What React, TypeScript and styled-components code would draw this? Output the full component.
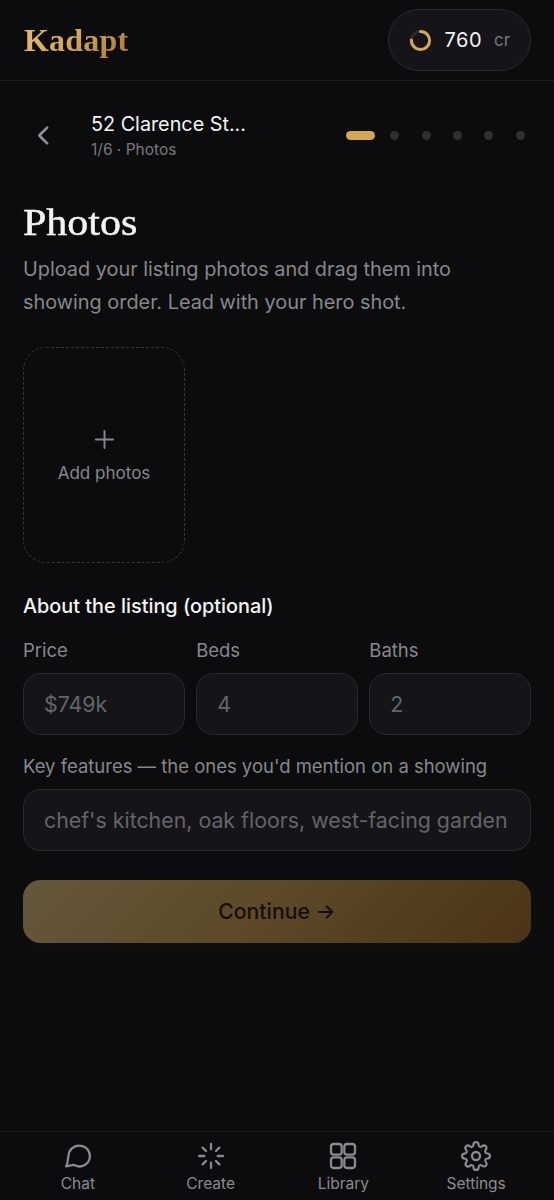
import React from "react";
import styled, { createGlobalStyle } from "styled-components";

const GlobalStyle = createGlobalStyle`
  *, *::before, *::after { box-sizing: border-box; }
  body {
    margin: 0;
    background: #0c0c0e;
    color: #f4f4f5;
    font-family: Inter, "Liberation Sans", sans-serif;
  }
  button, input { font: inherit; color: inherit; }
`;

const Screen = styled.div`
  display: flex;
  flex-direction: column;
  height: 1200px;
  width: 100%;
`;

const Header = styled.header`
  display: flex;
  align-items: center;
  justify-content: space-between;
  height: 81px;
  padding: 0 23px;
  border-bottom: 1px solid #1e1e20;
`;

const Brand = styled.div`
  padding-left: 1px;
  font-family: "Liberation Serif", serif;
  font-size: 32px;
  font-weight: 700;
  line-height: 40px;
  letter-spacing: 0.2px;
  background: linear-gradient(135deg, #e6c277 0%, #d4a650 50%, #a87532 100%);
  background-clip: text;
  -webkit-background-clip: text;
  color: transparent;
`;

const Credits = styled.div`
  display: flex;
  align-items: center;
  width: 143px;
  height: 62px;
  padding-left: 20px;
  border: 1px solid #2a2a2d;
  border-radius: 31px;
  background: #151519;
  svg { display: block; }
`;

const CreditCount = styled.span`
  margin-left: 12.5px;
  font-size: 20px;
  letter-spacing: 0.5px;
`;

const CreditUnit = styled.span`
  margin-left: 12px;
  font-size: 17px;
  color: #77777c;
`;

const Main = styled.main`
  flex: 1;
  display: flex;
  flex-direction: column;
  padding: 23px 23px 0;
`;

const StepBar = styled.div`
  display: flex;
  align-items: center;
  height: 62px;
`;

const BackButton = styled.button`
  display: flex;
  align-items: center;
  justify-content: center;
  width: 40px;
  height: 58px;
  padding: 0;
  border: 0;
  background: none;
  color: #8f8f94;
`;

const StepText = styled.div`
  flex: 1;
  margin-left: 28px;
`;

const StepTitle = styled.div`
  font-size: 19.8px;
  line-height: 28px;
`;

const StepMeta = styled.div`
  font-size: 15.5px;
  line-height: 23px;
  color: #77777c;
`;

const Dots = styled.div`
  display: flex;
  align-items: center;
  gap: 22.3px;
  padding-right: 6.5px;
`;

const Dot = styled.span<{ $active?: boolean }>`
  width: ${(p) => (p.$active ? 29 : 9)}px;
  height: 9px;
  margin-right: ${(p) => (p.$active ? -7 : 0)}px;
  border-radius: 5px;
  background: ${(p) => (p.$active ? "#d4a853" : "#303032")};
`;

const Title = styled.h1`
  align-self: flex-start;
  margin: 34px 0 0;
  font-family: "Liberation Serif", serif;
  font-size: 38px;
  font-weight: 400;
  line-height: 44px;
  transform: scaleX(1.105);
  transform-origin: left;
  -webkit-text-stroke: 0.5px currentColor;
`;

const Intro = styled.p`
  margin: 9px 0 0;
  font-size: 19.87px;
  line-height: 32.5px;
  color: #87878c;
`;

const AddTile = styled.button`
  display: flex;
  flex-direction: column;
  align-items: center;
  justify-content: center;
  gap: 6px;
  width: 162px;
  height: 216px;
  margin-top: 29px;
  padding: 1px 0 0;
  border: 1px dashed #363639;
  border-radius: 23px;
  background: none;
  color: #87878c;
  font-size: 17.05px;
  line-height: 26px;
`;

const SectionTitle = styled.h2`
  margin: 29px 0 0;
  font-size: 19.85px;
  font-weight: 500;
  line-height: 29px;
`;

const FieldRow = styled.div`
  display: grid;
  grid-template-columns: repeat(3, 1fr);
  gap: 11.5px;
  margin-top: 16px;
`;

const Field = styled.label<{ $top?: number }>`
  display: flex;
  flex-direction: column;
  gap: 10px;
  min-width: 0;
  margin-top: ${(p) => p.$top ?? 0}px;
  font-size: 18.48px;
  line-height: 26px;
  color: #87878c;
`;

const Input = styled.input`
  width: 100%;
  height: 62px;
  padding: 0 20px;
  border: 1px solid #29292c;
  border-radius: 17.5px;
  background: #151519;
  font-size: 21.33px;
  outline: none;
  &::placeholder { color: #646469; opacity: 1; }
`;

const Continue = styled.button`
  height: 62.5px;
  margin-top: 29px;
  padding: 0;
  border: 0;
  border-radius: 17.5px;
  background: linear-gradient(135deg, #65583a 0%, #5c4a29 45%, #4a3415 100%);
  box-shadow: 0 6px 26px rgba(212, 168, 83, 0.04);
  color: #1a0d08;
  font-size: 21.2px;
  font-weight: 550;
`;

const TabBar = styled.nav`
  display: grid;
  grid-template-columns: repeat(4, 1fr);
  height: 69px;
  padding: 0 11.5px;
  border-top: 1px solid #1c1c1e;
`;

const Tab = styled.div`
  display: flex;
  flex-direction: column;
  align-items: center;
  padding-top: 8px;
  color: #8a8a8f;
  font-size: 15.5px;
  line-height: 23px;
  svg { display: block; }
`;

const Icon = ({ size = 32, weight = 1.7, children }: { size?: number; weight?: number; children: React.ReactNode }) => (
  <svg width={size} height={size} viewBox="0 0 24 24" fill="none" stroke="currentColor"
    strokeWidth={weight} strokeLinecap="round" strokeLinejoin="round">
    {children}
  </svg>
);

const tabs = [
  {
    label: "Chat",
    icon: <path d="M20.9 11.9a7.8 7.8 0 0 1-11.6 6.9Q8.5 18.6 7.6 18.9L3.1 19.8Q4.2 17.6 4.3 15.5Q4.4 13.8 4.9 12A8 7.8 0 0 1 20.9 11.9z" />,
  },
  {
    label: "Create",
    icon: <path d="M12 3v4M12 17v4M3 12h4M17 12h4M5.7 5.7l2.6 2.6M15.7 15.7l2.6 2.6M5.7 18.3l2.6-2.6M15.7 8.3l2.6-2.6" />,
  },
  {
    label: "Library",
    icon: (
      <>
        <rect x="3" y="3" width="8" height="8" rx="2" />
        <rect x="13" y="3" width="8" height="8" rx="2" />
        <rect x="3" y="13" width="8" height="8" rx="2" />
        <rect x="13" y="13" width="8" height="8" rx="2" />
      </>
    ),
  },
  {
    label: "Settings",
    icon: (
      <>
        <circle cx="12" cy="12" r="3" />
        <path transform="translate(.6 .6) scale(.95)" d="M19.4 15a1.65 1.65 0 0 0 .33 1.82l.06.06a2 2 0 1 1-2.83 2.83l-.06-.06a1.65 1.65 0 0 0-1.82-.33 1.65 1.65 0 0 0-1 1.51V21a2 2 0 0 1-4 0v-.09A1.65 1.65 0 0 0 9 19.4a1.65 1.65 0 0 0-1.82.33l-.06.06a2 2 0 1 1-2.83-2.83l.06-.06a1.65 1.65 0 0 0 .33-1.82 1.65 1.65 0 0 0-1.51-1H3a2 2 0 0 1 0-4h.09A1.65 1.65 0 0 0 4.6 9a1.65 1.65 0 0 0-.33-1.82l-.06-.06a2 2 0 1 1 2.83-2.83l.06.06a1.65 1.65 0 0 0 1.82.33H9a1.65 1.65 0 0 0 1-1.51V3a2 2 0 0 1 4 0v.09a1.65 1.65 0 0 0 1 1.51 1.65 1.65 0 0 0 1.82-.33l.06-.06a2 2 0 1 1 2.83 2.83l-.06.06a1.65 1.65 0 0 0-.33 1.82V9a1.65 1.65 0 0 0 1.51 1H21a2 2 0 0 1 0 4h-.09a1.65 1.65 0 0 0-1.51 1z" />
      </>
    ),
  },
];

export default function App() {
  return (
    <>
      <GlobalStyle />
      <Screen>
        <Header>
          <Brand>Kadapt</Brand>
          <Credits>
            <svg width="23" height="23" viewBox="0 0 23 23" fill="none" strokeWidth="3">
              <circle cx="11.5" cy="11.5" r="9.1" stroke="#292930" />
              <circle cx="11.5" cy="11.5" r="9.1" stroke="#d4a853" strokeLinecap="round"
                pathLength="100" strokeDasharray="76 100" transform="rotate(-90 11.5 11.5)" />
            </svg>
            <CreditCount>760</CreditCount>
            <CreditUnit>cr</CreditUnit>
          </Credits>
        </Header>
        <Main>
          <StepBar>
            <BackButton aria-label="Back">
              <Icon size={29} weight={2.2}><path d="M15 18.5 8.5 12 15 5.5" /></Icon>
            </BackButton>
            <StepText>
              <StepTitle>52 Clarence St...</StepTitle>
              <StepMeta>1/6 · Photos</StepMeta>
            </StepText>
            <Dots>
              <Dot $active /><Dot /><Dot /><Dot /><Dot /><Dot />
            </Dots>
          </StepBar>
          <Title>Photos</Title>
          <Intro>Upload your listing photos and drag them into showing order. Lead with your hero shot.</Intro>
          <AddTile>
            <Icon size={29} weight={1.6}><path d="M12 4.9v14.2M4.9 12h14.2" /></Icon>
            Add photos
          </AddTile>
          <SectionTitle>About the listing (optional)</SectionTitle>
          <FieldRow>
            <Field>Price<Input placeholder="$749k" /></Field>
            <Field>Beds<Input placeholder="4" /></Field>
            <Field>Baths<Input placeholder="2" /></Field>
          </FieldRow>
          <Field $top={18}>
            Key features — the ones you'd mention on a showing
            <Input placeholder="chef's kitchen, oak floors, west-facing garden" />
          </Field>
          <Continue>Continue →</Continue>
        </Main>
        <TabBar>
          {tabs.map((t) => (
            <Tab key={t.label}>
              <Icon>{t.icon}</Icon>
              {t.label}
            </Tab>
          ))}
        </TabBar>
      </Screen>
    </>
  );
}
